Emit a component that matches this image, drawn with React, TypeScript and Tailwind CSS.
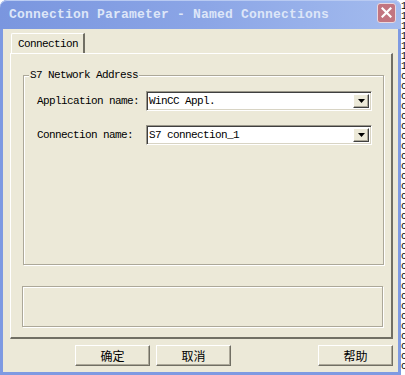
import React from "react";

const mono = { fontFamily: '"Liberation Mono", "DejaVu Sans Mono", monospace' };
const cjk = { fontFamily: '"Noto Sans CJK SC", "Noto Sans", sans-serif' };

function Combo({ value }: { value: string }) {
  return (
    <div className="w-[226px] h-[20px] flex items-stretch bg-white border border-t-[#9A978A] border-l-[#9A978A] border-r-white border-b-white shadow-[inset_1px_1px_0_#3F3F3F,inset_-1px_-1px_0_#D8D4C4]">
      <div className="flex-1 pl-[2px] pt-[2px] text-[11px] tracking-[-0.6px] leading-[14px] text-black" style={mono}>
        {value}
      </div>
      <div className="my-[2px] mr-[2px] w-[16px] bg-[#ECE9D8] border border-t-white border-l-white border-r-[#404040] border-b-[#404040] shadow-[inset_-1px_-1px_0_#ACA899] flex items-center justify-center">
        <svg width="7" height="4" viewBox="0 0 7 4">
          <path d="M0 0h7L3.5 4z" fill="#000" />
        </svg>
      </div>
    </div>
  );
}

function Btn({ label, cls }: { label: string; cls: string }) {
  return (
    <div
      className={`w-[75px] h-[21px] bg-[#ECE9D8] border border-t-white border-l-white border-r-[#716F64] border-b-[#716F64] shadow-[inset_-1px_-1px_0_#ACA899] flex items-center justify-center text-[12px] text-black ${cls}`}
      style={cjk}
    >
      {label}
    </div>
  );
}

export default function App() {
  const edge = "1111111cccccccccccccccccccccccccccccc".split("");
  return (
    <div className="w-[405px] h-[375px] bg-white flex overflow-hidden">
      <div className="w-[401px] h-[375px] flex flex-col bg-[#7E9AE2] rounded-t-[7px] shrink-0">
        <div className="h-[29px] shrink-0 flex items-center rounded-t-[7px] bg-gradient-to-r from-[#7A96DF] via-[#8BA5E6] to-[#A3BBEE] shadow-[inset_0_1px_0_#B8CAF2]">
          <div className="pl-[9px] pt-[1px] text-[13px] font-bold tracking-[0.2px] text-[#DDE6F8]" style={mono}>
            Connection Parameter - Named Connections
          </div>
          <div className="ml-auto mr-[5px] mb-[4px] w-[19px] h-[20px] rounded-[3px] bg-[#C27580] border border-[#E8D8E0] flex items-center justify-center">
            <svg width="11" height="11" viewBox="0 0 11 11">
              <path d="M1.5 1.5l8 8M9.5 1.5l-8 8" stroke="#fff" strokeWidth="2.2" strokeLinecap="square" />
            </svg>
          </div>
        </div>
        <div className="mx-[3px] mb-[3px] flex-1 bg-[#ECE9D8] flex flex-col">
          <div className="pt-[4px] pl-[8px] flex">
            <div className="w-[74px] h-[21px] border-t border-l border-white border-r-2 border-r-[#716F64] rounded-tl-[2px] text-[11px] tracking-[-0.6px] text-black pl-[6px] pt-[3px] leading-[14px]" style={mono}>
              Connection
            </div>
          </div>
          <div className="ml-[7px] w-[383px] h-[286px] -mt-[1px] border-t border-l border-white border-r-2 border-b-2 border-r-[#716F64] border-b-[#716F64] flex flex-col">
            <div className="ml-[12px] mt-[21px] w-[361px] h-[190px] border border-[#ACA899] shadow-[1px_1px_0_#fff,inset_1px_1px_0_#fff] relative flex flex-col">
              <div className="absolute -top-[8px] left-[5px] px-[1px] bg-[#ECE9D8] text-[11px] tracking-[-0.6px] leading-[14px] text-black" style={mono}>
                S7 Network Address
              </div>
              <div className="mt-[15px] ml-[13px] flex items-center">
                <div className="w-[109px] text-[11px] tracking-[-0.6px] text-black" style={mono}>
                  Application name:
                </div>
                <Combo value="WinCC Appl." />
              </div>
              <div className="mt-[14px] ml-[13px] flex items-center">
                <div className="w-[109px] text-[11px] tracking-[-0.6px] text-black" style={mono}>
                  Connection name:
                </div>
                <Combo value="S7 connection_1" />
              </div>
            </div>
            <div className="ml-[11px] mt-[21px] w-[361px] h-[41px] border border-[#ACA899] shadow-[1px_1px_0_#fff,inset_1px_1px_0_#fff]" />
          </div>
          <div className="mt-[6px] flex">
            <Btn label="确定" cls="ml-[72px]" />
            <Btn label="取消" cls="ml-[6px]" />
            <Btn label="帮助" cls="ml-[87px]" />
          </div>
        </div>
      </div>
      <div className="w-[4px] overflow-hidden text-[10px] leading-[10px] text-black pt-[2px]" style={mono}>
        {edge.map((c, i) => (
          <div key={i} className="h-[10px]">
            {c}
          </div>
        ))}
      </div>
    </div>
  );
}
